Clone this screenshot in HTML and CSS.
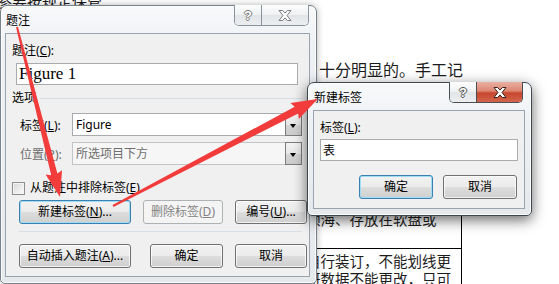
FILE: index.html
```html
<!DOCTYPE html>
<html lang="zh-CN">
<head>
  <meta charset="UTF-8" />
  <title>题注</title>
  <link rel="stylesheet" href="styles.css">
</head>
<body>
  <div class="screen">
    <!-- 背后的文档 -->
    <div class="doc">
      <p class="doc-top">参要按规定保管</p>
      <p class="doc-mid">十分明显的。手工记</p>
      <div class="doc-table">
        <div class="cell cell-a">
          <p>颁海、存放在软盘或</p>
        </div>
        <div class="cell cell-b">
          <p>自行装订，不能划线更</p>
          <p>研数据不能更改，只可</p>
        </div>
      </div>
    </div>

    <!-- 题注对话框 -->
    <div class="win win-caption">
      <div class="titlebar">
        <span class="win-title">题注</span>
        <div class="caption-btns">
          <span class="cap-btn cap-help">?</span>
          <span class="cap-btn cap-close">
            <svg width="14" height="11" viewBox="0 0 14 11"><polygon points="1,0.5 4.6,0.5 7,3.1 9.4,0.5 13,0.5 9,5.5 13,10.5 9.4,10.5 7,7.9 4.6,10.5 1,10.5 5,5.5" /></svg>
          </span>
        </div>
      </div>
      <div class="client caption-client">
        <div class="label">题注(<u>C</u>):</div>
        <div class="textbox caption-text">Figure 1</div>
        <div class="group-head"><span>选项</span><i class="group-rule"></i></div>
        <div class="field-row first-row">
          <span class="field-label">标签(<u>L</u>):</span>
          <div class="combo"><span class="combo-value">Figure</span><span class="combo-drop"></span></div>
        </div>
        <div class="field-row is-disabled">
          <span class="field-label">位置(<u>P</u>):</span>
          <div class="combo"><span class="combo-value">所选项目下方</span><span class="combo-drop"></span></div>
        </div>
        <div class="check-row"><span class="checkbox"></span><span>从题注中排除标签(<u>E</u>)</span></div>
        <div class="btn-row row-top">
          <button class="btn w-wide is-focused">新建标签(<u>N</u>)...</button>
          <button class="btn w-mid" disabled>删除标签(<u>D</u>)</button>
          <button class="btn w-narrow">编号(<u>U</u>)...</button>
        </div>
        <div class="sep"></div>
        <div class="btn-row row-bottom">
          <button class="btn w-wide">自动插入题注(<u>A</u>)...</button>
          <button class="btn w-ok">确定</button>
          <button class="btn w-narrow">取消</button>
        </div>
      </div>
    </div>

    <!-- 新建标签对话框 -->
    <div class="win win-newlabel is-active">
      <div class="titlebar">
        <span class="win-title">新建标签</span>
        <div class="caption-btns">
          <span class="cap-btn cap-help">?</span>
          <span class="cap-btn cap-close">
            <svg width="14" height="11" viewBox="0 0 14 11"><polygon points="1,0.5 4.6,0.5 7,3.1 9.4,0.5 13,0.5 9,5.5 13,10.5 9.4,10.5 7,7.9 4.6,10.5 1,10.5 5,5.5" /></svg>
          </span>
        </div>
      </div>
      <div class="client newlabel-client">
        <div class="label">标签(<u>L</u>):</div>
        <div class="textbox newlabel-text">表</div>
        <div class="btn-row row-end">
          <button class="btn w-dlg is-focused">确定</button>
          <button class="btn w-dlg">取消</button>
        </div>
      </div>
    </div>

    <!-- 红色箭头 -->
    <svg class="arrows" width="559" height="284" viewBox="0 0 559 284">
      <polygon transform="translate(17 27) rotate(75.8)" points="0,-1 152,-3.2 150,-8.5 175.4,0 150,8.5 152,3.2 0,1" />
      <polygon transform="translate(113 206) rotate(-27.6)" points="0,-1 207,-3.8 205,-9 231,0 205,9 207,3.8 0,1" />
    </svg>
  </div>
</body>
</html>
```

FILE: styles.css
```css
* {
  box-sizing: border-box;
}
body {
  margin: 0;
  width: 559px;
  height: 284px;
  overflow: hidden;
  background-color: #ffffff;
  font-family: "Noto Sans", "Noto Sans CJK SC", sans-serif;
  font-size: 12px;
  color: #000;
}
.screen {
  position: relative;
  width: 559px;
  height: 284px;
  overflow: hidden;
}

/* 文档 */
.doc {
  display: flow-root;
  font-family: "Noto Sans CJK SC", sans-serif;
  color: #1c1c1c;
}
.doc p {
  margin: 0;
  white-space: nowrap;
}
.doc-top {
  font-size: 15px;
  line-height: 15px;
  margin-top: -7px !important;
  margin-left: -3px !important;
}
.doc-mid {
  font-size: 16px;
  line-height: 16px;
  margin-top: 53px !important;
  margin-left: 319px !important;
}
.doc-table {
  margin-top: 103px;
  margin-left: 300px;
  width: 162px;
  border-right: 1px solid #000;
  font-size: 14.5px;
  line-height: 18px;
}
.cell {
  padding-left: 6px;
  overflow: hidden;
}
.cell-a {
  height: 69px;
  padding-top: 30px;
  border-bottom: 1px solid #000;
}
.cell-b {
  padding-top: 3px;
}

/* 窗口 */
.win {
  position: absolute;
  display: flex;
  flex-direction: column;
  border: 1px solid #78818a;
  border-radius: 7px 7px 5px 5px;
  background: linear-gradient(180deg, #f8f9fb 0, #eef1f4 40px, #e6e9ec 100%);
  box-shadow: inset 0 0 0 1px rgba(255, 255, 255, 0.8), 0 0 7px rgba(0, 0, 0, 0.3);
}
.win-caption {
  left: 0;
  top: 5px;
  width: 317px;
  height: 279px;
  padding: 0 6px 6px 4px;
}
.win-newlabel {
  left: 307px;
  top: 82px;
  width: 225px;
  height: 134px;
  padding: 0 6px 6px 5px;
  border-color: #3f4750;
  box-shadow: inset 0 0 0 1px rgba(255, 255, 255, 0.8), 0 4px 14px rgba(0, 0, 0, 0.6);
}
.titlebar {
  display: flex;
  align-items: flex-start;
  height: 27px;
  flex-shrink: 0;
}
.win-title {
  margin: 6px 0 0 1px;
  line-height: 16px;
  font-family: "Noto Sans CJK SC", sans-serif;
}
.caption-btns {
  display: flex;
  margin: -1px 1px 0 auto;
  height: 21px;
  border: 1px solid #8a939b;
  border-top: none;
  border-radius: 0 0 5px 5px;
  overflow: hidden;
}
.is-active .caption-btns {
  border-color: #4a4f55;
  margin-right: 2px;
}
.cap-btn {
  display: flex;
  align-items: center;
  justify-content: center;
  height: 20px;
  background: linear-gradient(180deg, #fdfdfd 0, #eef0f2 50%, #e2e5e8 51%, #eceef0 100%);
}
.cap-help {
  width: 27px;
  border-right: 1px solid #8a939b;
  font-family: "Liberation Sans", sans-serif;
  font-weight: bold;
  font-size: 13px;
  color: #fff;
  text-shadow: 1px 0 #7a7a7a, -1px 0 #7a7a7a, 0 1px #7a7a7a, 0 -1px #7a7a7a;
}
.cap-close {
  width: 46px;
}
.cap-close svg polygon {
  fill: #fff;
  stroke: #7d7d7d;
  stroke-width: 1;
  stroke-linejoin: round;
}
.is-active .cap-help {
  border-right-color: #4a4f55;
  text-shadow: 1px 0 #505050, -1px 0 #505050, 0 1px #505050, 0 -1px #505050;
}
.is-active .cap-close {
  width: 45px;
  background: linear-gradient(180deg, #eab0a3 0, #dc8671 45%, #c7462e 55%, #d4644c 100%);
}
.is-active .cap-close svg polygon {
  stroke: #3a2420;
}

/* 客户区 */
.client {
  flex: 1;
  border: 1px solid #9aa4ae;
  background-color: #f0f0f0;
}
.caption-client {
  padding: 9px 0 0 6px;
}
.newlabel-client {
  padding: 9px 0 0 6px;
}
.label {
  line-height: 16px;
}
u {
  text-decoration: underline;
  text-underline-offset: 1px;
}
.textbox {
  height: 22px;
  background-color: #fff;
  border: 1px solid #a9abaf;
  white-space: nowrap;
}
.caption-text {
  margin: 4px 0 0 4px;
  width: 282px;
  padding-left: 2px;
  font-family: "Liberation Serif", serif;
  font-size: 17px;
  line-height: 20px;
}
.newlabel-text {
  margin-top: 3px;
  width: 198px;
  padding-left: 2px;
  font-family: "Noto Sans CJK SC", sans-serif;
  line-height: 20px;
}
.group-head {
  display: flex;
  align-items: center;
  margin-top: 5px;
  line-height: 16px;
}
.group-rule {
  flex: 1;
  margin: 1px 7px 0 4px;
  border-top: 1px solid #d5dde3;
}
.field-row {
  display: flex;
  align-items: center;
  height: 23px;
  margin-top: 6px;
  margin-left: 8px;
}
.first-row {
  margin-top: 7px;
}
.field-label {
  width: 52px;
}
.combo {
  display: flex;
  width: 230px;
  height: 23px;
  background-color: #fff;
  border: 1px solid #a9abaf;
}
.combo-value {
  flex: 1;
  padding-left: 3px;
  line-height: 21px;
}
.combo-drop {
  position: relative;
  width: 17px;
  border: 1px solid #7c7c7c;
  margin: -1px -1px -1px 0;
  background: linear-gradient(180deg, #f3f3f3 0, #e6e6e6 50%, #d6d6d6 51%, #cbcbcb 100%);
}
.combo-drop::after {
  content: "";
  position: absolute;
  left: 4px;
  top: 10px;
  border-left: 3.5px solid transparent;
  border-right: 3.5px solid transparent;
  border-top: 4px solid #000;
}
.is-disabled .field-label,
.is-disabled .combo-value {
  color: #6d6d6d;
}
.is-disabled .combo {
  background-color: #f6f6f6;
  border-color: #c2c4c7;
}
.check-row {
  display: flex;
  align-items: center;
  gap: 5px;
  height: 16px;
  margin-top: 15px;
  line-height: 16px;
}
.checkbox {
  width: 13px;
  height: 13px;
  border: 1px solid #8e8f8f;
  background: linear-gradient(135deg, #d3d6da 0, #eeeeee 60%, #fbfbfb 100%);
  box-shadow: inset 0 0 0 1px #f4f4f4;
}

/* 按钮 */
.btn-row {
  display: flex;
}
.row-top {
  width: 288px;
  margin: 4px 0 0 7px;
  justify-content: space-between;
}
.row-bottom {
  width: 288px;
  margin: 12px 0 0 7px;
  gap: 12px;
}
.row-end {
  justify-content: flex-end;
  gap: 10px;
  margin-top: 14px;
  padding-right: 7px;
}
.btn {
  height: 24px;
  padding: 0;
  border: 1px solid #707070;
  border-radius: 3px;
  background: linear-gradient(180deg, #f2f2f2 0, #ebebeb 50%, #dddddd 51%, #cfcfcf 100%);
  box-shadow: inset 0 0 0 1px rgba(255, 255, 255, 0.75);
  font-family: "Noto Sans", "Noto Sans CJK SC", sans-serif;
  font-size: 12px;
  line-height: 22px;
  color: #000;
  white-space: nowrap;
}
.btn.is-focused {
  border-color: #3c7fb1;
  box-shadow: inset 0 0 0 1px #9fdcf6;
}
.btn:disabled {
  border-color: #adb2b5;
  background: #f4f4f4;
  box-shadow: none;
  color: #838383;
}
.w-wide {
  width: 112px;
}
.w-mid {
  width: 80px;
}
.w-narrow {
  width: 72px;
}
.w-ok {
  width: 73px;
  margin-left: auto;
}
.w-dlg {
  width: 74px;
}
.sep {
  margin: 7px 7px 0 7px;
  border-top: 1px solid #d7dee4;
}

/* 箭头 */
.arrows {
  position: absolute;
  left: 0;
  top: 0;
  pointer-events: none;
}
.arrows polygon {
  fill: #f23c3c;
}
```
